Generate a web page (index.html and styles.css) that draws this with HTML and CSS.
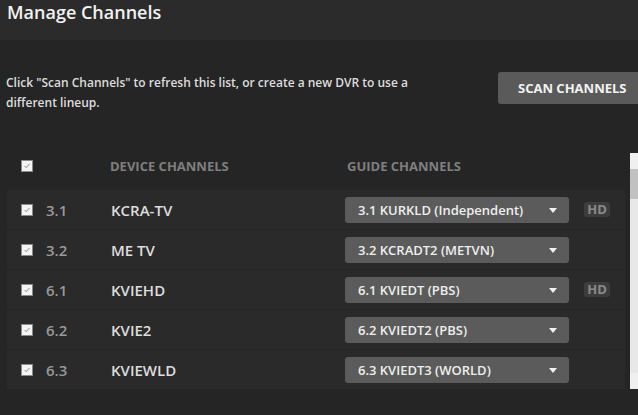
FILE: index.html
```html
<!DOCTYPE html>
<html lang="en">
<head>
    <meta charset="UTF-8">
    <meta name="viewport" content="width=device-width, initial-scale=1.0">
    <title>Manage Channels</title>
    <link rel="stylesheet" href="styles.css">
</head>
<body>
    <div class="header">
        <h1>Manage Channels</h1>
    </div>

    <div class="intro">
        <p class="intro-text">Click "Scan Channels" to refresh this list, or create a new DVR to use a different lineup.</p>
        <button type="button" class="scan-btn">SCAN CHANNELS</button>
    </div>

    <div class="list-wrap">
        <div class="list">
            <div class="list-head">
                <span class="check"><svg viewBox="0 0 12 12"><polyline points="3,6 5,8 9,3.5" /></svg></span>
                <span></span>
                <span class="col-title">DEVICE CHANNELS</span>
                <span class="col-title guide-title">GUIDE CHANNELS</span>
            </div>

            <div class="row">
                <span class="check"><svg viewBox="0 0 12 12"><polyline points="3,6 5,8 9,3.5" /></svg></span>
                <span class="num">3.1</span>
                <span class="name">KCRA-TV</span>
                <div class="select">3.1 KURKLD (Independent)<span class="arrow"></span></div>
                <span></span>
                <span class="hd">HD</span>
            </div>
            <div class="row">
                <span class="check"><svg viewBox="0 0 12 12"><polyline points="3,6 5,8 9,3.5" /></svg></span>
                <span class="num">3.2</span>
                <span class="name">ME TV</span>
                <div class="select">3.2 KCRADT2 (METVN)<span class="arrow"></span></div>
                <span></span>
                <span></span>
            </div>
            <div class="row">
                <span class="check"><svg viewBox="0 0 12 12"><polyline points="3,6 5,8 9,3.5" /></svg></span>
                <span class="num">6.1</span>
                <span class="name">KVIEHD</span>
                <div class="select">6.1 KVIEDT (PBS)<span class="arrow"></span></div>
                <span></span>
                <span class="hd">HD</span>
            </div>
            <div class="row">
                <span class="check"><svg viewBox="0 0 12 12"><polyline points="3,6 5,8 9,3.5" /></svg></span>
                <span class="num">6.2</span>
                <span class="name">KVIE2</span>
                <div class="select">6.2 KVIEDT2 (PBS)<span class="arrow"></span></div>
                <span></span>
                <span></span>
            </div>
            <div class="row">
                <span class="check"><svg viewBox="0 0 12 12"><polyline points="3,6 5,8 9,3.5" /></svg></span>
                <span class="num">6.3</span>
                <span class="name">KVIEWLD</span>
                <div class="select">6.3 KVIEDT3 (WORLD)<span class="arrow"></span></div>
                <span></span>
                <span></span>
            </div>
        </div>

        <div class="scrollbar">
            <span class="sb-up"></span>
            <span class="sb-thumb"></span>
            <span class="sb-track"></span>
            <span class="sb-down"></span>
        </div>
    </div>
</body>
</html>
```

FILE: styles.css
```css
body {
    margin: 0;
    background-color: #252525;
    font-family: "Open Sans", Arial, sans-serif;
    color: #ddd;
    overflow: hidden;
}

.header {
    height: 40px;
    background-color: #2b2b2b;
    padding-left: 7px;
}

.header h1 {
    margin: 0;
    font-size: 18px;
    font-weight: 600;
    line-height: 24px;
    color: #f2f2f2;
}

.intro {
    display: flex;
    align-items: flex-start;
    margin-top: 32px;
    padding-left: 6px;
}

.intro-text {
    width: 420px;
    margin: 1px 0 0 0;
    font-size: 12px;
    font-weight: 600;
    line-height: 20px;
    color: #ddd;
}

.scan-btn {
    margin-left: auto;
    margin-right: -9px;
    width: 149px;
    height: 32px;
    padding: 0 0 0 20px;
    text-align: left;
    background-color: #5a5a5a;
    border: none;
    border-radius: 3px;
    color: #f2f2f2;
    font-family: "Open Sans", Arial, sans-serif;
    font-size: 13px;
    font-weight: 700;
}

.list-wrap {
    display: flex;
    margin-top: 40px;
    height: 236px;
}

.list {
    flex: 1;
    padding-left: 7px;
    margin-right: 5px;
}

.list-head,
.row {
    display: grid;
    grid-template-columns: 25px 65px 234px 224px 15px 26px;
    align-items: center;
    padding-left: 14px;
}

.list-head {
    height: 26px;
    margin-bottom: 10px;
}

.row {
    height: 40px;
    background-color: #2a2a2a;
    border-top: 1px solid #262626;
    box-sizing: border-box;
}

.check {
    width: 12px;
    height: 12px;
    box-sizing: border-box;
    background-color: #f4f4f4;
    border: 1px solid #8a8a8a;
    display: flex;
}

.check svg {
    width: 10px;
    height: 10px;
    fill: none;
    stroke: #666;
    stroke-width: 0.9;
}

.col-title {
    font-size: 13px;
    font-weight: 700;
    color: #7f7f7f;
    margin-left: -1px;
}

.guide-title {
    margin-left: 2px;
}

.num {
    font-size: 15px;
    font-weight: 600;
    color: #999;
}

.name {
    font-size: 15px;
    font-weight: 600;
    color: #ddd;
}

.select {
    position: relative;
    height: 26px;
    line-height: 26px;
    padding-left: 13px;
    background-color: #5b5b5b;
    border-radius: 3px;
    font-size: 13px;
    font-weight: 600;
    color: #eee;
}

.arrow {
    position: absolute;
    right: 12px;
    top: 11px;
    width: 0;
    height: 0;
    border-left: 4px solid transparent;
    border-right: 4px solid transparent;
    border-top: 5px solid #f2f2f2;
}

.hd {
    height: 15px;
    line-height: 15px;
    text-align: center;
    background-color: #3c3c3c;
    border-radius: 3px;
    font-size: 13px;
    font-weight: 700;
    color: #8a8a8a;
}

.scrollbar {
    width: 8px;
    display: flex;
    flex-direction: column;
    background-color: #e8e8e8;
}

.sb-up,
.sb-down {
    height: 16px;
    background-color: #f0f0f0;
}

.sb-thumb {
    height: 30px;
    background-color: #c1c1c1;
}

.sb-track {
    flex: 1;
}
```
